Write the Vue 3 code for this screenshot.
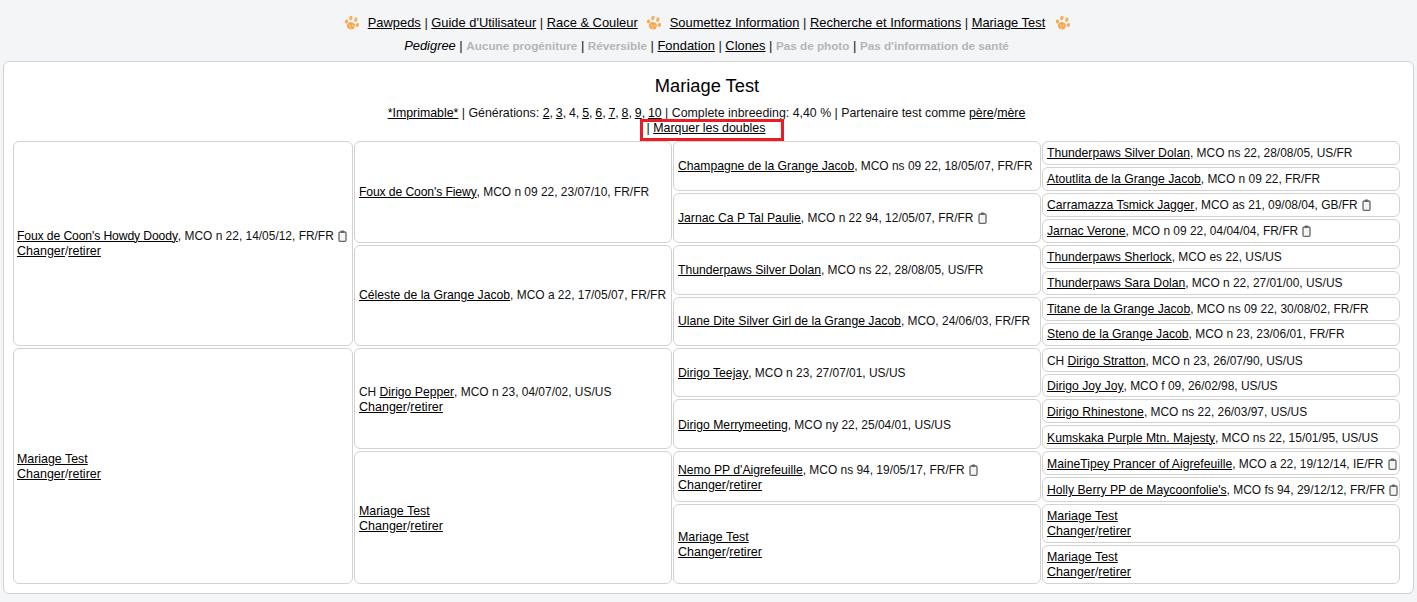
<script setup>
const nav1a = ['Pawpeds', "Guide d'Utilisateur", 'Race & Couleur']
const nav1b = ['Soumettez Information', 'Recherche et Informations', 'Mariage Test']
const gens = ['2', '3', '4', '5', '6', '7', '8', '9', '10']
const c = (name, info, opts = {}) => ({ name, info, ...opts })
const cells = [
  c("Foux de Coon's Howdy Doody", ', MCO n 22, 14/05/12, FR/FR', { col: 1, row: 1, span: 8, clip: true, change: true }),
  c("Foux de Coon's Fiewy", ', MCO n 09 22, 23/07/10, FR/FR', { col: 2, row: 1, span: 4 }),
  c('Champagne de la Grange Jacob', ', MCO ns 09 22, 18/05/07, FR/FR', { col: 3, row: 1, span: 2 }),
  c('Thunderpaws Silver Dolan', ', MCO ns 22, 28/08/05, US/FR', { col: 4, row: 1, span: 1 }),
  c('Atoutlita de la Grange Jacob', ', MCO n 09 22, FR/FR', { col: 4, row: 2, span: 1 }),
  c('Jarnac Ca P Tal Paulie', ', MCO n 22 94, 12/05/07, FR/FR', { col: 3, row: 3, span: 2, clip: true }),
  c('Carramazza Tsmick Jagger', ', MCO as 21, 09/08/04, GB/FR', { col: 4, row: 3, span: 1, clip: true }),
  c('Jarnac Verone', ', MCO n 09 22, 04/04/04, FR/FR', { col: 4, row: 4, span: 1, clip: true }),
  c('Céleste de la Grange Jacob', ', MCO a 22, 17/05/07, FR/FR', { col: 2, row: 5, span: 4 }),
  c('Thunderpaws Silver Dolan', ', MCO ns 22, 28/08/05, US/FR', { col: 3, row: 5, span: 2 }),
  c('Thunderpaws Sherlock', ', MCO es 22, US/US', { col: 4, row: 5, span: 1 }),
  c('Thunderpaws Sara Dolan', ', MCO n 22, 27/01/00, US/US', { col: 4, row: 6, span: 1 }),
  c('Ulane Dite Silver Girl de la Grange Jacob', ', MCO, 24/06/03, FR/FR', { col: 3, row: 7, span: 2 }),
  c('Titane de la Grange Jacob', ', MCO ns 09 22, 30/08/02, FR/FR', { col: 4, row: 7, span: 1 }),
  c('Steno de la Grange Jacob', ', MCO n 23, 23/06/01, FR/FR', { col: 4, row: 8, span: 1 }),
  c('Mariage Test', '', { col: 1, row: 9, span: 8, change: true }),
  c('Dirigo Pepper', ', MCO n 23, 04/07/02, US/US', { col: 2, row: 9, span: 4, pre: 'CH ', change: true }),
  c('Dirigo Teejay', ', MCO n 23, 27/07/01, US/US', { col: 3, row: 9, span: 2 }),
  c('Dirigo Stratton', ', MCO n 23, 26/07/90, US/US', { col: 4, row: 9, span: 1, pre: 'CH ' }),
  c('Dirigo Joy Joy', ', MCO f 09, 26/02/98, US/US', { col: 4, row: 10, span: 1 }),
  c('Dirigo Merrymeeting', ', MCO ny 22, 25/04/01, US/US', { col: 3, row: 11, span: 2 }),
  c('Dirigo Rhinestone', ', MCO ns 22, 26/03/97, US/US', { col: 4, row: 11, span: 1 }),
  c('Kumskaka Purple Mtn. Majesty', ', MCO ns 22, 15/01/95, US/US', { col: 4, row: 12, span: 1 }),
  c('Mariage Test', '', { col: 2, row: 13, span: 4, change: true }),
  c("Nemo PP d'Aigrefeuille", ', MCO ns 94, 19/05/17, FR/FR', { col: 3, row: 13, span: 2, clip: true, change: true }),
  c('MaineTipey Prancer of Aigrefeuille', ', MCO a 22, 19/12/14, IE/FR', { col: 4, row: 13, span: 1, clip: true }),
  c("Holly Berry PP de Maycoonfolie's", ', MCO fs 94, 29/12/12, FR/FR', { col: 4, row: 14, span: 1, clip: true }),
  c('Mariage Test', '', { col: 3, row: 15, span: 2, change: true }),
  c('Mariage Test', '', { col: 4, row: 15, span: 1, change: true }),
  c('Mariage Test', '', { col: 4, row: 16, span: 1, change: true }),
]
const pos = (x) => ({ gridColumn: x.col, gridRow: `${x.row} / span ${x.span}` })
const cls = (x) => ({
  wide: x.col > 1,
  own: !x.info,
  tight: x.name.includes("Coon's"),
  low: x.row >= 9 && (x.row < 15 || x.col === 3),
})
</script>

<template>
  <div class="page">
    <div class="nav">
      <div class="nav1">
        <svg class="paw first" viewBox="0 0 16 16"><use href="#paw" /></svg>
        <template v-for="(n, i) in nav1a" :key="n"><span v-if="i"> | </span><a>{{ n }}</a></template>
        <svg class="paw" viewBox="0 0 16 16">
          <defs>
            <g id="paw" fill="#f5a84f" transform="rotate(18 8 8)">
              <ellipse cx="7.8" cy="11" rx="4" ry="3.6" />
              <ellipse cx="2.2" cy="8.2" rx="1.6" ry="2" />
              <ellipse cx="5.4" cy="3.6" rx="1.6" ry="2.3" />
              <ellipse cx="10.6" cy="3.6" rx="1.6" ry="2.3" />
              <ellipse cx="13.6" cy="8.2" rx="1.6" ry="2" />
              <circle cx="6.6" cy="11" r=".8" fill="#fbd6a4" />
              <circle cx="9.4" cy="10.2" r=".8" fill="#fbd6a4" />
              <circle cx="8" cy="13" r=".7" fill="#fbd6a4" />
              <circle cx="5.4" cy="3.4" r=".6" fill="#fbd6a4" />
              <circle cx="10.6" cy="3.4" r=".6" fill="#fbd6a4" />
            </g>
          </defs>
          <use href="#paw" />
        </svg>
        <template v-for="(n, i) in nav1b" :key="n"><span v-if="i"> | </span><a>{{ n }}</a></template>
        <svg class="paw last" viewBox="0 0 16 16"><use href="#paw" /></svg>
      </div>
      <div class="nav2">
        <i>Pedigree</i> | <b>Aucune progéniture</b> | <b>Réversible</b> | <a>Fondation</a> | <a>Clones</a> | <b>Pas de photo</b> | <b>Pas d'information de santé</b>
      </div>
    </div>

    <main class="card">
      <h1>Mariage Test</h1>
      <div class="meta first-meta">
        <a>*Imprimable*</a> | Générations:
        <span class="gens"><template v-for="(g, i) in gens" :key="g"><a v-if="g !== '4'">{{ g }}</a><template v-else>{{ g }}</template><template v-if="i < gens.length - 1">, </template></template></span>
        | Complete inbreeding: 4,40 % | Partenaire test comme <a>père</a>/<a>mère</a>
      </div>
      <div class="meta second"><span class="mark">| <a>Marquer les doubles</a></span></div>

      <div class="tree">
        <div v-for="(x, i) in cells" :key="i" class="cell" :class="cls(x)" :style="pos(x)">
          <div>
            <template v-if="x.pre">{{ x.pre }}</template><a>{{ x.name }}</a>{{ x.info }}
            <svg v-if="x.clip" class="clip" viewBox="0 0 9 12"><rect x="1" y="2" width="7" height="9.3" rx="1.2" fill="#f4f4f2" stroke="#666" stroke-width="1.3" /><rect x="2.8" y=".4" width="3.4" height="2.6" rx=".6" fill="#666" /></svg>
          </div>
          <div v-if="x.change" class="change"><a>Changer</a>/<a>retirer</a></div>
        </div>
      </div>
    </main>
  </div>
</template>

<style>
html, body { margin: 0; background: #f4f5f7; }
</style>

<style scoped>
.page {
  height: 602px;
  box-sizing: border-box;
  padding: 14px 3px 0;
  font-family: "Liberation Sans", Arial, sans-serif;
  font-size: 11.95px;
  line-height: 15px;
  color: #111;
  background: #f4f5f7;
  overflow: hidden;
}
a { color: #000; text-decoration: underline; }
.nav { text-align: center; }
.nav1 {
  height: 18px;
  line-height: 18px;
  font-size: 12.9px;
  padding-right: 2px;
  display: flex;
  justify-content: center;
  align-items: center;
  white-space: pre;
}
.paw { width: 16px; height: 16px; margin: 0 8px 0 8px; }
.paw.first { margin-left: 0; margin-right: 8px; }
.paw.last { margin-left: 10px; margin-right: 0; }
.nav2 {
  margin-top: 6px;
  height: 15px;
  padding-right: 4px;
  font-size: 12.9px;
  white-space: pre-wrap;
}
.nav2 i { color: #000; }
.nav2 b { color: #b5b5b5; font-size: 11.7px; }
.card {
  margin-top: 8px;
  height: 533px;
  box-sizing: border-box;
  background: #fff;
  border: 1px solid #d2d2d2;
  border-radius: 6px;
  padding: 13px 10px 0 9px;
  text-align: center;
}
h1 {
  margin: 0 2px 10px 0;
  font-size: 18.3px;
  font-weight: 400;
  line-height: 21px;
  color: #000;
}
.meta { height: 15px; font-size: 12.37px; }
.first-meta { padding-right: 3px; }
.gens { word-spacing: -0.6px; }
.second { height: 20px; font-size: 12.4px; }
.mark {
  display: inline-block;
  box-sizing: border-box;
  width: 144px;
  height: 22px;
  margin: -2px 0 0 7px;
  border: 3px solid #ed1c24;
  line-height: 12px;
  text-align: left;
  padding-left: 4px;
  position: relative;
  z-index: 1;
  vertical-align: top;
}
.tree {
  display: grid;
  grid-template-columns: 340px 318px 368px 358px;
  grid-template-rows: repeat(7, 24px) 23px 24px 23px repeat(3, 24px) 25px 39px 39px;
  gap: 2px 1px;
  text-align: left;
}
.cell {
  box-sizing: border-box;
  border: 1px solid #d2d2d2;
  border-radius: 6px;
  padding: 0 3px;
  display: flex;
  flex-direction: column;
  justify-content: center;
  white-space: nowrap;
  min-width: 0;
}
.cell.wide { padding-left: 4px; }
.cell.low { padding-top: 2px; }
.cell a { font-size: 12.2px; }
.cell.tight > div:first-child a { letter-spacing: -0.13px; }
.cell.own a { font-size: 12.4px; }
.cell .change a { font-size: 12.5px; }
.clip { width: 9px; height: 12px; margin-left: 1px; vertical-align: -2px; }
</style>
